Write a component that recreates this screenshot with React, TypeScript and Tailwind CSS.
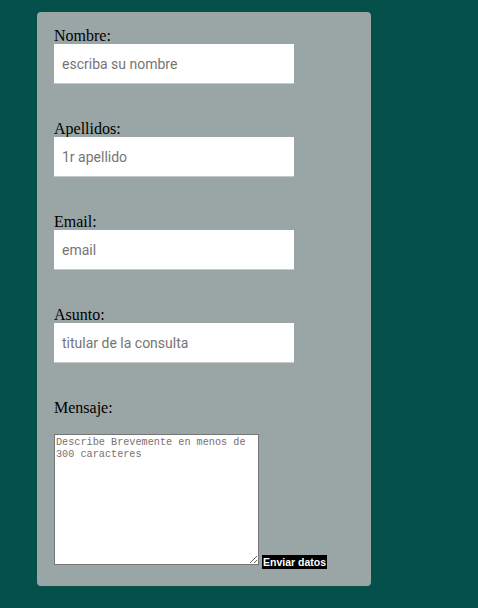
export default function App() {
  const fields = [
    { label: "Nombre:", placeholder: "escriba su nombre" },
    { label: "Apellidos:", placeholder: "1r apellido" },
    { label: "Email:", placeholder: "email" },
    { label: "Asunto:", placeholder: "titular de la consulta" },
  ];
  return (
    <div className="min-h-screen bg-[#06504c] pl-[37px] pt-[12px]">
      <form className="flex w-[334px] flex-col rounded-[4px] bg-[#9aa5a5] px-[17px] pt-[16px] pb-[21px] font-['Liberation_Serif',serif] text-black">
        <div className="flex flex-col gap-[37px]">
          {fields.map((f, i) => (
            <div key={i} className="flex flex-col">
              <label className="block text-[16px] leading-[16px]">{f.label}</label>
              <input
                type="text"
                placeholder={f.placeholder}
                className="h-[40px] w-[240px] border-0 border-b border-[#c8c8c8] bg-white px-[8px] font-['Roboto',sans-serif] text-[14px] text-black outline-none placeholder:text-[#757575]"
              />
            </div>
          ))}
          <div className="flex flex-col">
            <label className="block text-[16px] leading-[16px]">Mensaje:</label>
            <div className="mt-[18px] flex items-end gap-[3px]">
              <textarea
                placeholder="Describe Brevemente en menos de 300 caracteres"
                className="h-[131px] w-[205px] border border-[#767676] bg-white px-[1px] pt-[2px] font-['Liberation_Mono',monospace] text-[10.2px] leading-[12px] outline-none placeholder:text-[#7a6f6f]"
              />
              <button
                type="button"
                className="mb-[-4px] bg-black px-[1px] font-['Liberation_Sans',sans-serif] text-[10.5px] font-bold leading-[14px] text-white"
              >
                Enviar datos
              </button>
            </div>
          </div>
        </div>
      </form>
    </div>
  );
}
